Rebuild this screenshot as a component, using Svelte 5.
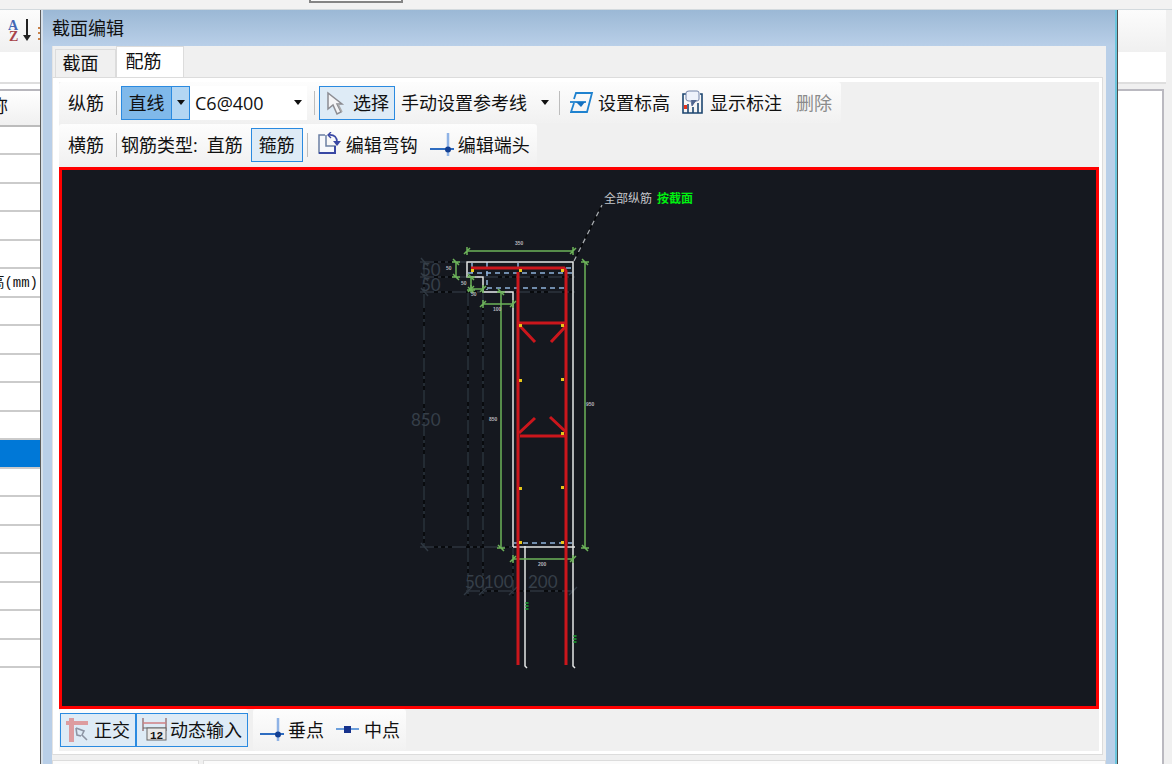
<script lang="ts">
  let diameter = $state("C6@400");
  let tab = $state("rebar");
  let ortho = $state(true);
  let dynamicInput = $state(true);

  // rows of the property grid that stays visible behind the dialog
  const rows = Array.from({ length: 19 }, (_, i) => ({
    text: i === 5 ? "标高(mm)" : "",
    selected: i === 11,
  }));

  // dashed reference axes
  const axes = [
    [424, 262, 424, 548],
    [468, 292, 468, 596],
    [483, 292, 483, 596],
    [513, 548, 513, 596],
    [420, 262, 467, 262],
    [420, 277, 575, 277],
    [420, 292, 575, 292],
    [420, 547, 513, 547],
    [466, 591, 574, 591],
  ];

  const axisTexts = [
    { x: 421, y: 276, text: "50" },
    { x: 421, y: 291, text: "50" },
    { x: 411, y: 426, text: "850" },
    { x: 465, y: 588, text: "50" },
    { x: 484, y: 588, text: "100" },
    { x: 528, y: 588, text: "200" },
  ];

  // dimension lines
  const dims = [
    [467, 251, 573, 251],
    [456, 262, 456, 277],
    [471, 277, 471, 290],
    [471, 289, 483, 289],
    [483, 304, 513, 304],
    [501, 292, 501, 548],
    [585, 262, 585, 548],
    [513, 559, 573, 559],
  ];

  const dimTexts = [
    { x: 515, y: 245, text: "350" },
    { x: 446, y: 270, text: "50" },
    { x: 461, y: 285, text: "50" },
    { x: 471, y: 296, text: "50" },
    { x: 493, y: 311, text: "100" },
    { x: 489, y: 421, text: "850" },
    { x: 586, y: 406, text: "950" },
    { x: 538, y: 566, text: "200" },
  ];

  const bars = [
    [472, 270], [520, 270], [562, 270], [520, 325], [562, 325], [520, 380], [562, 379],
    [562, 433], [520, 488], [562, 487], [520, 542], [562, 542],
  ];
</script>

{#snippet tick(x: number, y: number, vertical: boolean)}
  {#if vertical}
    <path d="M{x - 4} {y}H{x + 4}M{x - 3} {y - 3}L{x + 3} {y + 3}" />
  {:else}
    <path d="M{x} {y - 4}V{y + 4}M{x - 3} {y + 3}L{x + 3} {y - 3}" />
  {/if}
{/snippet}

{#snippet perpendicular()}
  <svg width="26" height="26" viewBox="0 0 26 26">
    <path d="M18 1V24" stroke="#8fb3e6" stroke-width="2.5" />
    <path d="M0 17H24" stroke="#2e6cc0" stroke-width="2" />
    <circle cx="18" cy="17.500" r="3" fill="#123f93" />
  </svg>
{/snippet}

<div class="app">
  <div class="top-strip"><div class="top-box"></div></div>

  <div class="workspace">
    <aside class="left-pane">
      <div class="pane-toolbar">
        <button class="sort" aria-label="排序">
          <svg width="32" height="28" viewBox="0 0 32 28">
            <text x="0" y="12" class="sort-a">A</text>
            <text x="1" y="23" class="sort-z">Z</text>
            <path d="M19 1V19" stroke="#222" stroke-width="2" />
            <path d="M15 17H23L19 23Z" fill="#222" />
            <path d="M30 10H32M30 15H32M30 21H32" stroke="#c8824a" stroke-width="2" />
          </svg>
        </button>
      </div>
      <div class="pane-blank"></div>
      <table class="props">
        <thead>
          <tr><th><div class="cell name">名称</div></th></tr>
        </thead>
        <tbody>
          {#each rows as row}
            <tr class:selected={row.selected}>
              <td><div class="cell">{row.text}</div></td>
            </tr>
          {/each}
        </tbody>
      </table>
    </aside>

    <section class="dialog">
      <header class="title">截面编辑</header>
      <div class="body">
        <div class="tabs" role="tablist">
          <button role="tab" class="tab" class:active={tab === "section"} aria-selected={tab === "section"} onclick={() => (tab = "section")}>截面</button>
          <button role="tab" class="tab" class:active={tab === "rebar"} aria-selected={tab === "rebar"} onclick={() => (tab = "rebar")}>配筋</button>
        </div>

        <div class="panel">
          <div class="toolbars">
            <div class="strip">
              <span class="label">纵筋</span>
              <i class="sep"></i>
              <div class="split">
                <button class="split-main">直线</button>
                <button class="split-arrow" aria-label="直线选项"><i class="caret"></i></button>
              </div>
              <div class="combo">
                <select aria-label="钢筋规格" bind:value={diameter}>
                  <option>C6@400</option>
                  <option>C8@200</option>
                </select>
                <i class="caret"></i>
              </div>
              <i class="sep"></i>
              <button class="tool on">
                <svg width="26" height="28" viewBox="0 0 26 28">
                  <path d="M3 4V20L8 16L12 25L16 23L12 15H17Z" fill="#f4f4f6" stroke="#8c8c92" stroke-width="1.5" />
                  <path d="M13 15L17 23" stroke="#aaa" stroke-width="1.5" />
                </svg>
                <span>选择</span>
              </button>
              <button class="tool">手动设置参考线<i class="caret far"></i></button>
              <i class="sep"></i>
              <button class="tool">
                <svg width="26" height="26" viewBox="0 0 26 26">
                  <path d="M4 9L6 3H22L17 22H1L4 13" fill="none" stroke="#1f82cf" stroke-width="1.8" />
                  <path d="M0 12H16" stroke="#1f82cf" stroke-width="1.8" />
                  <path d="M6 12H15L11 17Z" fill="#1470c0" />
                </svg>
                <span>设置标高</span>
              </button>
              <button class="tool">
                <svg width="26" height="26" viewBox="0 0 26 26">
                  <path d="M5 4H1V23H20V4H18M6 14V23M11 17V23M16 13V23" fill="none" stroke="#1d4670" stroke-width="1.6" />
                  <rect x="2" y="15" width="3" height="4" fill="#e8341c" />
                  <path d="M7 1H15Q17 1 17 3V9Q17 11 15 11H13L10 16L9 11H7Q4 11 4 9V3Q4 1 7 1Z" fill="#eef2fb" stroke="#7182a8" />
                  <path d="M9 10H15L10 16Z" fill="#50668f" />
                </svg>
                <span>显示标注</span>
              </button>
              <button class="tool plain" disabled>删除</button>
            </div>

            <div class="strip">
              <span class="label">横筋</span>
              <i class="sep"></i>
              <span class="kind">钢筋类型:</span>
              <button class="tool plain">直筋</button>
              <button class="tool plain on">箍筋</button>
              <i class="sep"></i>
              <button class="tool">
                <svg width="26" height="26" viewBox="0 0 26 26">
                  <path d="M7 3H1V21H17V14H8V3" fill="#f6f8fc" stroke="#6b7fa3" stroke-width="1.5" />
                  <path d="M1 21H17V14" fill="none" stroke="#3948a4" stroke-width="2" />
                  <path d="M10 3C17 2 19 6 19 10" fill="none" stroke="#3948a4" stroke-width="1.6" />
                  <path d="M13 0L10 3L13 6" fill="none" stroke="#3948a4" stroke-width="1.4" />
                  <path d="M15 9H23L19 14Z" fill="#3948a4" />
                </svg>
                <span>编辑弯钩</span>
              </button>
              <button class="tool">
                {@render perpendicular()}
                <span>编辑端头</span>
              </button>
            </div>
          </div>

          <div class="canvas">
            <svg viewBox="62 170 1034 536" preserveAspectRatio="xMidYMid meet">
              <g fill="none" stroke-width="1.4">
                {#each axes as [x1, y1, x2, y2]}
                  <line {x1} {y1} {x2} {y2} stroke="#050608" />
                  <line {x1} {y1} {x2} {y2} stroke="#303943" stroke-dasharray="14 4 3 4 3 4" />
                {/each}
                <path stroke="#303943" d="M421 258l7 8M421 273l7 8M421 288l7 8M421 543l7 8M464 595l8 -8M479 595l8 -8M509 595l8 -8M569 595l8 -8" />
              </g>
              {#each axisTexts as t}
                <text x={t.x} y={t.y} class="axis-text">{t.text}</text>
              {/each}

              <path d="M574 261L602 205" stroke="#050608" stroke-width="1.5" />
              <path d="M574 261L602 205" stroke="#a9adb2" stroke-width="1.3" stroke-dasharray="5 5" />
              <text x="604" y="203" class="note">全部纵筋</text>
              <text x="657" y="203" class="note green">按截面</text>

              <g fill="none" stroke="#8fb3dc" stroke-width="1.5" stroke-dasharray="5 4">
                <path d="M468 273H572M487 288H566M487 262V290M472 263V273M518 263V273M566 268H573M514 543H572" />
              </g>

              <path d="M513 547V292H483V277H467V262H573V666l2 2M513 547H575M525 546V666l2 2" fill="none" stroke="#e4e6e6" stroke-width="1.5" />

              <g fill="none" stroke="#6db35a" stroke-width="1.5">
                {#each dims as [x1, y1, x2, y2]}
                  <line {x1} {y1} {x2} {y2} />
                  {@render tick(x1, y1, x1 === x2)}
                  {@render tick(x2, y2, x1 === x2)}
                {/each}
              </g>
              {#each dimTexts as t}
                <text x={t.x} y={t.y} class="dim-text">{t.text}</text>
              {/each}

              <g fill="none" stroke="#cb161c" stroke-width="3">
                <path d="M471 268H564L566 271V665M518 272V665" />
                <path d="M518 323H566M520 436H565" />
                <path d="M519 325L535 342M566 326L551 342M519 433L535 418M566 432L550 417" />
              </g>

              {#each bars as [x, y]}
                <rect x={x - 1} y={y - 1} width="3" height="3" fill="#e6c619" />
              {/each}
              <path d="M527 602V611M575 635V644" stroke="#17832a" stroke-width="3" stroke-dasharray="2 1" />
            </svg>
          </div>

          <div class="bottom-bar">
            <div class="strip snug">
              <button class="tool on" aria-pressed={ortho} onclick={() => (ortho = !ortho)}>
                <svg width="26" height="26" viewBox="0 0 26 26">
                  <path d="M0 4H22V8H8V25H3V8H0ZM3 1H8V5H3Z" fill="#dd9c9f" />
                  <path d="M10 11L18 14L16 18L21 23M10 11L11 18L15 19" fill="none" stroke="#8d94a3" stroke-width="1.6" />
                </svg>
                <span>正交</span>
              </button>
              <button class="tool on" aria-pressed={dynamicInput} onclick={() => (dynamicInput = !dynamicInput)}>
                <svg width="26" height="26" viewBox="0 0 26 26">
                  <path d="M1 1V14M24 1V14" stroke="#9a7b7d" stroke-width="1.5" />
                  <path d="M1 6H24" stroke="#cf7f83" stroke-width="1.5" />
                  <path d="M1 11H24" stroke="#666" />
                  <rect x="5" y="11" width="19" height="12" fill="#e8e8e8" stroke="#666" />
                  <text x="8" y="22" class="icon-num">12</text>
                </svg>
                <span>动态输入</span>
              </button>
            </div>
            <div class="strip snug">
              <button class="tool">
                {@render perpendicular()}
                <span>垂点</span>
              </button>
              <button class="tool">
                <svg width="26" height="26" viewBox="0 0 26 26">
                  <path d="M0 12H23" stroke="#6c9fdc" stroke-width="2" />
                  <rect x="8" y="9" width="7" height="7" fill="#16328c" />
                </svg>
                <span>中点</span>
              </button>
            </div>
          </div>
        </div>

        <div class="footer">
          <div class="foot-box small"></div>
          <div class="foot-box"></div>
        </div>
      </div>
    </section>

    <aside class="right-pane">
      <div class="pane-toolbar"></div>
      <div class="pane-blank"></div>
      <div class="right-view"></div>
    </aside>
  </div>
</div>

<style>
  :global(body) {
    background: #f0f0f0;
  }

  .app {
    display: flex;
    flex-direction: column;
    min-height: 100vh;
    font-family: "Open Sans", "Noto Sans CJK SC", sans-serif;
    font-size: 18px;
    line-height: 24px;
    color: #111;
    overflow: hidden;
  }

  button,
  select {
    font: inherit;
    color: inherit;
    margin: 0;
    padding: 0;
    border: 0;
    background: none;
    white-space: nowrap;
  }

  svg {
    display: block;
    flex: none;
  }

  .top-strip {
    height: 9px;
    padding-left: 309px;
    background: #f2f2f2;
    border-bottom: 1px solid #d3dade;
  }

  .top-box {
    width: 90px;
    height: 1px;
    border: 2px solid #858585;
    border-top: 0;
    background: #fafafa;
  }

  .workspace {
    display: flex;
    flex: 1;
  }

  /* panes behind the dialog */
  .left-pane {
    flex: 0 0 40px;
    background: #fff;
    overflow: hidden;
  }

  .right-pane {
    display: flex;
    flex-direction: column;
    flex: 0 0 54px;
    box-sizing: border-box;
    padding-right: 6px;
    background: #f0f0f0;
  }

  .pane-toolbar {
    height: 42px;
    background: linear-gradient(#fcfcfc, #f0f0f0);
  }

  .pane-blank {
    height: 30px;
    background: #fff;
    border-bottom: 2px solid #dedede;
  }

  .right-view {
    flex: 1;
    margin-top: 5px;
    margin-right: 2px;
    background: #fff;
    border: 2px solid #bab9c0;
    border-width: 2px 2px 0 0;
  }

  .sort {
    display: block;
    padding: 8px 0 0 8px;
  }

  .sort-a,
  .sort-z {
    font: bold 14px "Liberation Serif", serif;
    fill: #4567b5;
  }

  .sort-z {
    fill: #a8434a;
  }

  .props {
    width: 100%;
    margin-top: 5px;
    border-collapse: separate;
    border-spacing: 0;
    table-layout: fixed;
    border-top: 2px solid #b8b7bd;
  }

  .props th {
    height: 34px;
    padding: 0;
    font-weight: normal;
    background: linear-gradient(#fff, #f0f0f0);
    border-bottom: 2px solid #bcbcbc;
  }

  .props td {
    height: 26px;
    padding: 0;
    border-bottom: 2px solid #cbcbcb;
  }

  .props tr:nth-child(even) td {
    height: 27px;
  }

  .props tr.selected td {
    background: #0078d7;
  }

  .cell {
    display: flex;
    justify-content: flex-end;
    height: 24px;
    padding-right: 2px;
    font-family: "Liberation Mono", "Noto Sans CJK SC", monospace;
    font-size: 14px;
    white-space: nowrap;
    overflow: hidden;
  }

  .cell.name {
    padding-right: 32px;
    font-size: 18px;
  }

  /* dialog */
  .dialog {
    display: flex;
    flex-direction: column;
    flex: 1;
    min-width: 0;
    box-sizing: border-box;
    padding: 0 11px;
    background: #b9cfe8 linear-gradient(#9bb8d5, #b9cfe8 36px);
    border-left: 1px solid #5c5c5c;
    border-right: 1px solid #4d4d4d;
    box-shadow: inset 2px 0 #d6e0ea, inset -2px 0 #6bc6dd;
  }

  .title {
    height: 36px;
    line-height: 37px;
  }

  .body {
    display: flex;
    flex-direction: column;
    flex: 1;
    background: #f0f0f0;
  }

  .tabs {
    display: flex;
    align-items: flex-end;
    height: 31px;
    padding-left: 2px;
  }

  .tab {
    width: 61px;
    height: 28px;
    padding-right: 10px;
    padding-bottom: 2px;
    border: 1px solid #dcdcdc;
    border-bottom: 0;
  }

  .tab.active {
    width: 68px;
    height: 31px;
    padding-right: 13px;
    background: #fff;
  }

  .panel {
    display: flex;
    flex-direction: column;
    flex: 1;
    margin-right: 3px;
    padding: 4px 3px 3px 6px;
    background: #fff;
    border: 1px solid #dcdcdc;
  }

  .tabs,
  .panel {
    border-left: 1px solid #e4e4e4;
  }

  .toolbars {
    display: flex;
    flex-direction: column;
    align-items: flex-start;
    gap: 1px;
    padding-bottom: 2px;
    background: #f0f0f0;
  }

  .strip {
    display: flex;
    align-items: center;
    height: 41px;
    padding-right: 1px;
    background: linear-gradient(#fdfdfd, #f1f1f1);
    border-radius: 3px;
  }

  .label {
    padding: 0 8px 0 9px;
  }

  .sep {
    width: 1px;
    height: 24px;
    margin: 0 4px;
    background: #bdbdbd;
  }

  .kind {
    margin-right: 1px;
  }

  .split {
    display: flex;
    box-sizing: border-box;
    height: 34px;
    border: 1px solid #2a8ae0;
  }

  .split-main {
    width: 50px;
    background: #80b9ea;
    border-right: 1px solid #2a8ae0;
  }

  .split-arrow {
    width: 17px;
    display: flex;
    align-items: center;
    justify-content: center;
    background: #b3d6f3;
  }

  .caret {
    border: 4px solid transparent;
    border-top: 5px solid #111;
    border-bottom: 0;
  }

  .caret.far {
    margin-left: 12px;
  }

  .combo {
    display: flex;
    align-items: center;
    width: 117px;
    height: 34px;
    margin-right: 3px;
    background: #fff;
  }

  .combo select {
    appearance: none;
    flex: 1;
    width: 106px;
    height: 34px;
    margin-right: -13px;
    padding-left: 5px;
    outline: 0;
  }

  .combo .caret {
    margin-right: 5px;
    pointer-events: none;
  }

  .tool {
    display: flex;
    align-items: center;
    gap: 2px;
    box-sizing: border-box;
    height: 34px;
    padding: 0 5px;
    border: 1px solid transparent;
  }

  .tool.plain {
    padding: 0 7px;
  }

  .tool.on {
    background: #deebf6;
    border-color: #2a8ae0;
  }

  .tool:disabled {
    color: #8b8b8b;
  }

  .canvas {
    display: flex;
    flex: 1;
    min-height: 0;
    background: #15181f;
    border: 3px solid #f00;
  }

  .canvas svg {
    flex: 1;
    width: 100%;
    min-width: 0;
  }

  .axis-text {
    font: 17px Lato, sans-serif;
    fill: #363f49;
  }

  .note {
    font: 12px "Noto Sans CJK SC", sans-serif;
    fill: #c4c6ca;
  }

  .note.green {
    font-weight: bold;
    fill: #00f010;
  }

  .dim-text {
    font: bold 5px "Liberation Sans", sans-serif;
    fill: #b4b4ba;
  }

  .icon-num {
    font: bold 11px "Liberation Mono", monospace;
    fill: #111;
  }

  .bottom-bar {
    display: flex;
    gap: 5px;
    background: #f0f0f0;
  }

  .snug {
    height: 42px;
    padding-left: 1px;
    padding-right: 0;
  }

  .footer {
    display: flex;
    gap: 4px;
    height: 4px;
    margin-top: 5px;
  }

  .foot-box {
    flex: 1;
    background: #fbfbfb;
    border: 1px solid #dcdcdc;
    border-bottom: 0;
  }

  .foot-box.small {
    flex: 0 0 145px;
  }
</style>
